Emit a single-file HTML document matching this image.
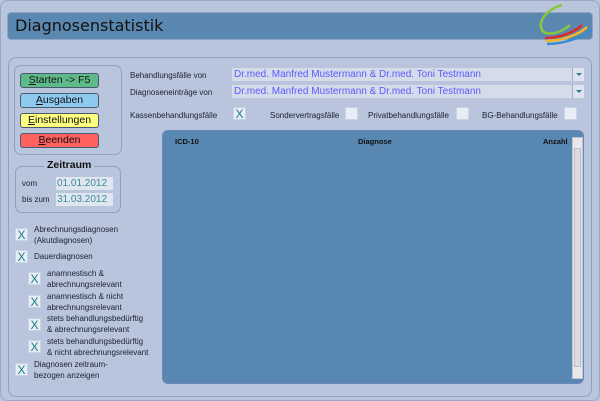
<!DOCTYPE html>
<html><head><meta charset="utf-8"><style>
*{margin:0;padding:0;box-sizing:border-box}
body{width:600px;height:401px;background:#b8c5dc;font-family:"Liberation Sans",sans-serif;position:relative;overflow:hidden}
.a{position:absolute}
.t{font-size:8px;color:#1a2030}
.btn{position:absolute;left:20px;width:79px;height:15px;border:1px solid #4a5a70;border-radius:3px;font-size:10.5px;text-align:center;line-height:13px;color:#111}
.cb{position:absolute;width:13px;height:13px;background:#e8eef6;border:1px solid #c8d2e2;color:#1a7a8a;font-size:12px;line-height:12px;text-align:center}
.dd{position:absolute;left:232px;width:352px;height:13px;background:#d4dcea;color:#5a5aff;font-size:10px;line-height:13px;padding-left:2px}
.dd b{position:absolute;right:0;top:0;width:12px;height:13px;background:#dde4ef;border-left:1px solid #aab}
.dd b:after{content:"";position:absolute;left:3px;top:5px;border-left:3px solid transparent;border-right:3px solid transparent;border-top:3px solid #2a7a8a}
.f{position:absolute;left:56px;width:57px;height:13px;background:#dfe6f0;color:#3a8a9a;font-size:10px;line-height:13px;padding-left:1px}
</style></head><body>
<div class="a" style="left:0;top:0;width:600px;height:401px;border:1px solid #9aa8c4;border-radius:8px"></div>
<div class="a" style="left:7px;top:12px;width:586px;height:28px;background:#5a88b0;border-radius:4px;border:1px solid #8ea4c4"></div>
<div class="a" style="left:15px;top:14px;font-family:'DejaVu Sans',sans-serif;font-size:16px;color:#111;line-height:24px">Diagnosenstatistik</div>
<svg class="a" style="left:530px;top:2px" width="65" height="45" viewBox="0 0 65 45">
<path d="M32 3 C15 8 8 20 12 28 C16 34 30 32 40 23" stroke="#8cc63e" stroke-width="2.5" fill="none"/>
<path d="M15 36 C30 36 45 30 52 23" stroke="#e02a2a" stroke-width="2.5" fill="none"/>
<path d="M16 39 C32 39 50 32 57 25" stroke="#f5b820" stroke-width="2.5" fill="none"/>
<path d="M17 42 C35 42 52 35 62 28" stroke="#3a8ad0" stroke-width="2.5" fill="none"/>
</svg>
<div class="a" style="left:8px;top:57px;width:584px;height:340px;border:1px solid #8ea0c4;border-radius:8px"></div>
<div class="a" style="left:14px;top:65px;width:108px;height:90px;border:1px solid #8ea0c4;border-radius:7px"></div>
<div class="btn" style="top:73px;background:#5fba8a"><u>S</u>tarten -&gt; F5</div>
<div class="btn" style="top:93px;background:#8ecaf0"><u>A</u>usgaben</div>
<div class="btn" style="top:113px;background:#ffff80"><u>E</u>instellungen</div>
<div class="btn" style="top:133px;background:#ff6060"><u>B</u>eenden</div>
<div class="a" style="left:15px;top:166px;width:106px;height:47px;border:1px solid #8ea0c4;border-radius:7px"></div>
<div class="a" style="left:44px;top:159px;background:#b8c5dc;padding:0 3px;font-size:10.5px;font-weight:bold;color:#111">Zeitraum</div>
<div class="a t" style="left:22px;top:179px">vom</div>
<div class="a t" style="left:22px;top:195px">bis zum</div>
<div class="f" style="top:177px">01.01.2012</div>
<div class="f" style="top:193px">31.03.2012</div>
<div class="cb" style="left:15px;top:228px">X</div><div class="a t" style="left:34px;top:224px;line-height:11px">Abrechnungsdiagnosen<br>(Akutdiagnosen)</div>
<div class="cb" style="left:15px;top:250px">X</div><div class="a t" style="left:34px;top:252px">Dauerdiagnosen</div>
<div class="cb" style="left:28px;top:272px">X</div><div class="a t" style="left:47px;top:269px;line-height:10.5px">anamnestisch &amp;<br>abrechnungsrelevant</div>
<div class="cb" style="left:28px;top:295px">X</div><div class="a t" style="left:47px;top:292px;line-height:10.5px">anamnestisch &amp; nicht<br>abrechnungsrelevant</div>
<div class="cb" style="left:28px;top:318px">X</div><div class="a t" style="left:47px;top:314px;line-height:10.5px">stets behandlungsbedürftig<br>&amp; abrechnungsrelevant</div>
<div class="cb" style="left:28px;top:340px">X</div><div class="a t" style="left:47px;top:337px;line-height:10.5px">stets behandlungsbedürftig<br>&amp; nicht abrechnungsrelevant</div>
<div class="cb" style="left:15px;top:363px">X</div><div class="a t" style="left:34px;top:360px;line-height:10.5px">Diagnosen zeitraum-<br>bezogen anzeigen</div>
<div class="a t" style="left:130px;top:71px">Behandlungsfälle von</div>
<div class="a t" style="left:130px;top:88px">Diagnoseneinträge von</div>
<div class="dd" style="top:68px">Dr.med. Manfred Mustermann &amp; Dr.med. Toni Testmann<b></b></div>
<div class="dd" style="top:85px">Dr.med. Manfred Mustermann &amp; Dr.med. Toni Testmann<b></b></div>
<div class="a t" style="left:130px;top:111px">Kassenbehandlungsfälle</div>
<div class="cb" style="left:233px;top:107px;width:13px;height:13px">X</div>
<div class="a t" style="left:270px;top:111px">Sondervertragsfälle</div>
<div class="cb" style="left:345px;top:107px"></div>
<div class="a t" style="left:368px;top:111px">Privatbehandlungsfälle</div>
<div class="cb" style="left:456px;top:107px"></div>
<div class="a t" style="left:482px;top:111px">BG-Behandlungsfälle</div>
<div class="cb" style="left:564px;top:107px"></div>
<div class="a" style="left:162px;top:130px;width:422px;height:254px;background:#5887b1;border:1px solid #6a88b8;border-radius:6px"></div>
<div class="a" style="left:175px;top:137px;font-size:7.5px;font-weight:bold;color:#111">ICD-10</div>
<div class="a" style="left:358px;top:137px;font-size:7.5px;font-weight:bold;color:#111">Diagnose</div>
<div class="a" style="left:543px;top:137px;font-size:7.5px;font-weight:bold;color:#111">Anzahl</div>
<div class="a" style="left:572px;top:137px;width:11px;height:242px;background:#e8e8ec;border:1px solid #c0c4cc"></div>
<div class="a" style="left:574px;top:148px;width:7px;height:219px;background:#dcdce0;border:1px solid #b8bcc4"></div>
</body></html>
